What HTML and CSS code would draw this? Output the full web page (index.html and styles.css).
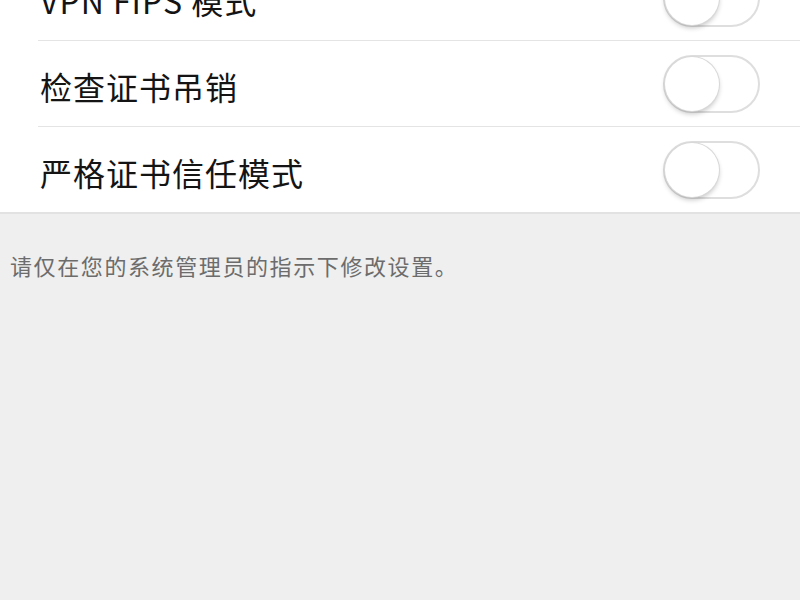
FILE: index.html
```html
<!DOCTYPE html>
<html lang="zh">
<head>
<meta charset="utf-8">
<link rel="stylesheet" href="styles.css">
</head>
<body>
<div class="group">
  <div class="row"><span class="label">VPN FIPS 模式</span><span class="toggle"><span class="knob"></span></span></div>
  <div class="row"><span class="label">检查证书吊销</span><span class="toggle"><span class="knob"></span></span></div>
  <div class="row last"><span class="label">严格证书信任模式</span><span class="toggle"><span class="knob"></span></span></div>
</div>
<p class="footer">请仅在您的系统管理员的指示下修改设置。</p>
</body>
</html>
```
FILE: styles.css
```css
html, body {
  margin: 0;
  padding: 0;
  background: #efefef;
  font-family: "Noto Sans CJK SC", "Noto Sans", sans-serif;
  overflow: hidden;
}
.group {
  background: #fff;
  margin-top: -45px;
  padding-left: 38px;
  border-bottom: 2px solid #e2e2e2;
}
.row {
  height: 85px;
  display: flex;
  align-items: center;
  justify-content: space-between;
  padding-right: 40px;
  border-bottom: 1px solid #e4e4e4;
}
.row.last {
  border-bottom: none;
}
.label {
  font-size: 32px;
  letter-spacing: 1px;
  color: #141414;
  padding-left: 2px;
  padding-top: 4px;
}
.toggle {
  width: 93px;
  height: 54px;
  border: 2px solid #dedede;
  border-radius: 30px;
  display: flex;
  align-items: center;
  position: relative;
}
.knob {
  width: 54px;
  height: 54px;
  border-radius: 50%;
  background: #fff;
  box-shadow: 0 0 0 1px #d8d8d8, 0 3px 5px rgba(0,0,0,0.22);
}
.footer {
  margin: 35px 0 0 10px;
  font-size: 22px;
  color: #6c6c6c;
  letter-spacing: 1.6px;
}
```
